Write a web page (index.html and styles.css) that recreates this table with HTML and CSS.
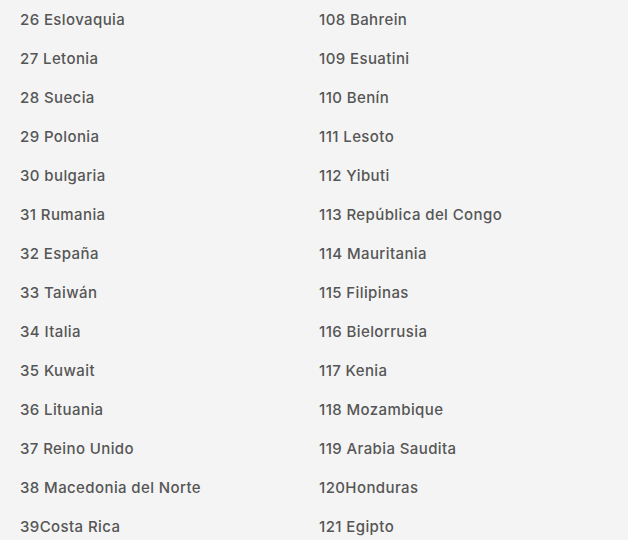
FILE: index.html
```html
<!DOCTYPE html>
<html lang="es">
<head>
<meta charset="utf-8">
<link rel="stylesheet" href="styles.css">
</head>
<body>
<div class="cols">
  <ul class="list">
    <li>26 Eslovaquia</li>
    <li>27 Letonia</li>
    <li>28 Suecia</li>
    <li>29 Polonia</li>
    <li>30 bulgaria</li>
    <li>31 Rumania</li>
    <li>32 España</li>
    <li>33 Taiwán</li>
    <li>34 Italia</li>
    <li>35 Kuwait</li>
    <li>36 Lituania</li>
    <li>37 Reino Unido</li>
    <li>38 Macedonia del Norte</li>
    <li>39Costa Rica</li>
  </ul>
  <ul class="list">
    <li>108 Bahrein</li>
    <li>109 Esuatini</li>
    <li>110 Benín</li>
    <li>111 Lesoto</li>
    <li>112 Yibuti</li>
    <li>113 República del Congo</li>
    <li>114 Mauritania</li>
    <li>115 Filipinas</li>
    <li>116 Bielorrusia</li>
    <li>117 Kenia</li>
    <li>118 Mozambique</li>
    <li>119 Arabia Saudita</li>
    <li>120Honduras</li>
    <li>121 Egipto</li>
  </ul>
</div>
</body>
</html>
```
FILE: styles.css
```css
html, body {
  margin: 0;
  padding: 0;
  background: #f4f4f4;
}
body {
  font-family: Inter, "Noto Sans", sans-serif;
  font-weight: 500;
  font-size: 15px;
  letter-spacing: 0.4px;
  color: #565656;
}
.cols {
  display: grid;
  grid-template-columns: 299px 1fr;
  padding-left: 20px;
}
.list {
  list-style: none;
  margin: 0;
  padding: 0;
}
.list li {
  height: 39px;
  line-height: 39px;
  white-space: nowrap;
}
```
